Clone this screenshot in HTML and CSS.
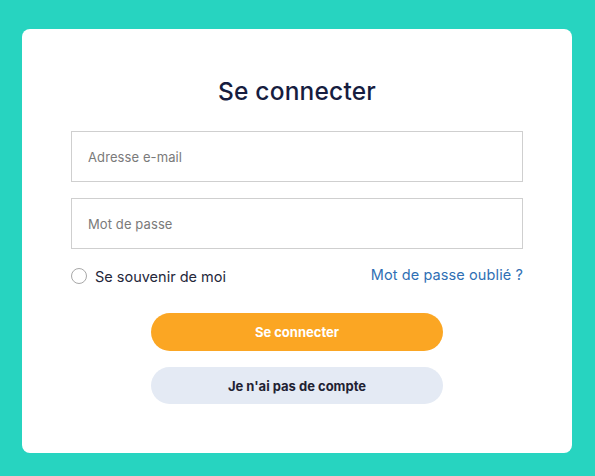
FILE: index.html
```html
<!DOCTYPE html>
<html lang="fr">
<head>
<meta charset="utf-8">
<title>Se connecter</title>
<link rel="stylesheet" href="styles.css">
</head>
<body>
<main class="page">
  <form class="card">
    <h1 class="title">Se connecter</h1>
    <input class="field" type="email" placeholder="Adresse e-mail">
    <input class="field field-second" type="password" placeholder="Mot de passe">
    <div class="options">
      <label class="remember"><span class="radio"></span>Se souvenir de moi</label>
      <a class="forgot" href="#">Mot de passe oublié ?</a>
    </div>
    <div class="actions">
      <button class="btn btn-primary" type="button">Se connecter</button>
      <button class="btn btn-secondary" type="button">Je n'ai pas de compte</button>
    </div>
  </form>
</main>
</body>
</html>
```

FILE: styles.css
```css
* { box-sizing: border-box; }
html, body { margin: 0; padding: 0; }
body {
  background: #27d4c0;
  font-family: "Inter", "Noto Sans", sans-serif;
  width: 595px;
  height: 476px;
  overflow: hidden;
}
.page {
  padding: 29px 23px 0 22px;
}
.card {
  background: #ffffff;
  border-radius: 8px;
  height: 424px;
  padding: 44px 49px 0 49px;
  display: flex;
  flex-direction: column;
}
.title {
  margin: 0;
  text-align: center;
  font-size: 24.5px;
  line-height: 36px;
  font-weight: 500;
  color: #161d3f;
  letter-spacing: 0.2px;
}
.field {
  margin-top: 22px;
  height: 51px;
  width: 100%;
  border: 1px solid #cfcfcf;
  border-radius: 0;
  padding: 0 16px;
  font-family: inherit;
  font-size: 13px;
  color: #333;
  outline: none;
  letter-spacing: 0.1px;
}
.field::placeholder { color: #7a7a7a; }
.field-second { margin-top: 16px; }
.options {
  margin-top: 17px;
  height: 20px;
  display: flex;
  justify-content: space-between;
  align-items: center;
}
.remember {
  display: flex;
  align-items: center;
  gap: 8px;
  font-size: 14.5px;
  color: #24273a;
}
.radio {
  width: 16px;
  height: 16px;
  border: 1px solid #a8a8a8;
  border-radius: 50%;
}
.forgot {
  font-size: 14.5px;
  color: #2f6fb4;
  text-decoration: none;
  margin-top: -3px;
  letter-spacing: 0.1px;
}
.actions {
  margin-top: 27px;
  display: flex;
  flex-direction: column;
  align-items: center;
  gap: 16px;
}
.btn {
  width: 292px;
  height: 38px;
  border: none;
  border-radius: 19px;
  font-family: inherit;
  font-size: 13px;
  font-weight: 700;
  cursor: pointer;
}
.btn-primary {
  background: #fba623;
  color: #ffffff;
}
.btn-secondary {
  background: #e4eaf4;
  color: #1f2233;
  height: 37px;
}
```
